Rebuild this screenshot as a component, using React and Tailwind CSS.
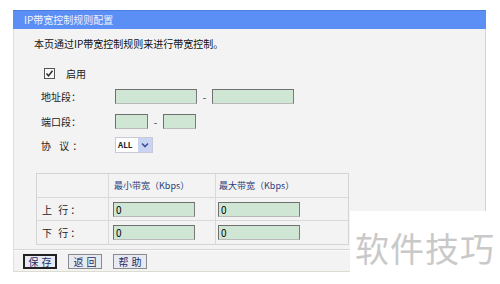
const font = { fontFamily: '"Noto Sans CJK SC", "DejaVu Sans", sans-serif' };

function Field({ w, value = '' }) {
  return (
    <div
      className={`${w} h-[15px] bg-[#cfe6d4] border border-t-[#6f6f6f] border-l-[#6f6f6f] border-b-[#b9b9b9] border-r-[#7a7a7a] text-[10px] leading-[13px] pl-[2px] text-black`}
    >
      {value}
    </div>
  );
}

function Btn({ children, focus }) {
  return (
    <div
      className={`w-[34px] h-[15px] flex items-center justify-center text-[10px] leading-none tracking-[3px] pl-[3px] text-[#1f2f6a] bg-[#e6eaf3] ${
        focus ? 'border-2 border-[#222]' : 'border border-[#8a8a8a]'
      }`}
    >
      {children}
    </div>
  );
}

export default function App() {
  return (
    <div className="relative w-[500px] h-[284px] bg-white overflow-hidden" style={font}>
      <div className="ml-[13px] pt-[10px] w-[473px]">
        <div className="h-[19px] bg-[#5b8ff5] border-t border-[#4a7fe0] text-[10px] leading-[18px] text-[#eef3ff] pl-[11px]">
          IP带宽控制规则配置
        </div>
        <div className="h-[243px] bg-[#f3f3f3] border-l border-r border-b border-l-[#e6e2c6] border-r-[#d8d6c0] border-b-[#dcdcd0]">
          <div className="pt-[8px] pl-[20px] h-[22px] text-[10px] leading-[14px] text-[#111]">
            本页通过IP带宽控制规则来进行带宽控制。
          </div>

          <div className="mt-[16px] pl-[30px] flex items-center h-[13px] gap-[11px]">
            <div className="w-[11px] h-[11px] border border-[#555] bg-[#f8f8f8] flex items-center justify-center">
              <svg width="9" height="9" viewBox="0 0 9 9">
                <path d="M1.5 4.5 L3.5 6.8 L7.5 1.8" fill="none" stroke="#2a2a2a" strokeWidth="1.4" />
              </svg>
            </div>
            <span className="text-[10px] text-[#222]">启用</span>
          </div>

          <div className="mt-[9px] pl-[27px] flex items-center h-[15px]">
            <span className="w-[74px] text-[10px] text-[#222]">地址段：</span>
            <Field w="w-[82px]" />
            <span className="w-[15px] text-center text-[10px] text-[#333]">-</span>
            <Field w="w-[82px]" />
          </div>

          <div className="mt-[10px] pl-[27px] flex items-center h-[15px]">
            <span className="w-[74px] text-[10px] text-[#222]">端口段：</span>
            <Field w="w-[33px]" />
            <span className="w-[15px] text-center text-[10px] text-[#333]">-</span>
            <Field w="w-[33px]" />
          </div>

          <div className="mt-[8px] pl-[27px] flex items-center h-[16px]">
            <span className="w-[74px] text-[10px] text-[#222] tracking-[3px]">协 议：</span>
            <div className="w-[38px] h-[16px] flex border border-[#c9c9d8] bg-white">
              <span className="flex-1 text-[8px] font-bold leading-[14px] pl-[2px] text-[#222]">ALL</span>
              <div className="w-[14px] bg-[#c8d4f2] flex items-center justify-center">
                <svg width="8" height="6" viewBox="0 0 8 6">
                  <path d="M1 1.5 L4 4.5 L7 1.5" fill="none" stroke="#3c4fa0" strokeWidth="1.6" />
                </svg>
              </div>
            </div>
          </div>

          <div className="mt-[20px] ml-[22px] w-[313px] border border-[#d4d4d4] bg-[#f3f3f3]">
            <div className="flex h-[24px] border-b border-[#d9d9d9]">
              <div className="w-[72px] border-r border-[#d9d9d9]" />
              <div className="w-[107px] border-r border-[#d9d9d9] text-[9px] leading-[24px] pl-[5px] text-[#2d3b7a]">
                最小带宽（Kbps）
              </div>
              <div className="flex-1 text-[9px] leading-[24px] pl-[3px] text-[#2d3b7a]">最大带宽（Kbps）</div>
            </div>
            {['上 行：', '下 行：'].map((label, i) => (
              <div key={label} className={`flex h-[23px] ${i === 0 ? 'border-b border-[#d9d9d9]' : ''}`}>
                <div className="w-[72px] border-r border-[#d9d9d9] text-[10px] leading-[23px] pl-[5px] text-[#222] tracking-[2px]">
                  {label}
                </div>
                <div className="w-[107px] border-r border-[#d9d9d9] flex items-center pl-[4px]">
                  <Field w="w-[82px]" value="0" />
                </div>
                <div className="flex-1 flex items-center pl-[2px]">
                  <Field w="w-[82px]" value="0" />
                </div>
              </div>
            ))}
          </div>

          <div className="mt-[4px] h-[2px] border-t border-b border-t-[#d6d6d6] border-b-[#fbfbfb]" />

          <div className="mt-[3px] pl-[9px] flex gap-[11px]">
            <Btn focus>保存</Btn>
            <Btn>返回</Btn>
            <Btn>帮助</Btn>
          </div>
        </div>
      </div>

      <div className="absolute left-[350px] top-[211px] w-[150px] h-[73px] bg-white flex items-center justify-center">
        <span className="text-[34px] leading-none text-[#c9c9c9] tracking-[1px]">软件技巧</span>
      </div>
    </div>
  );
}
